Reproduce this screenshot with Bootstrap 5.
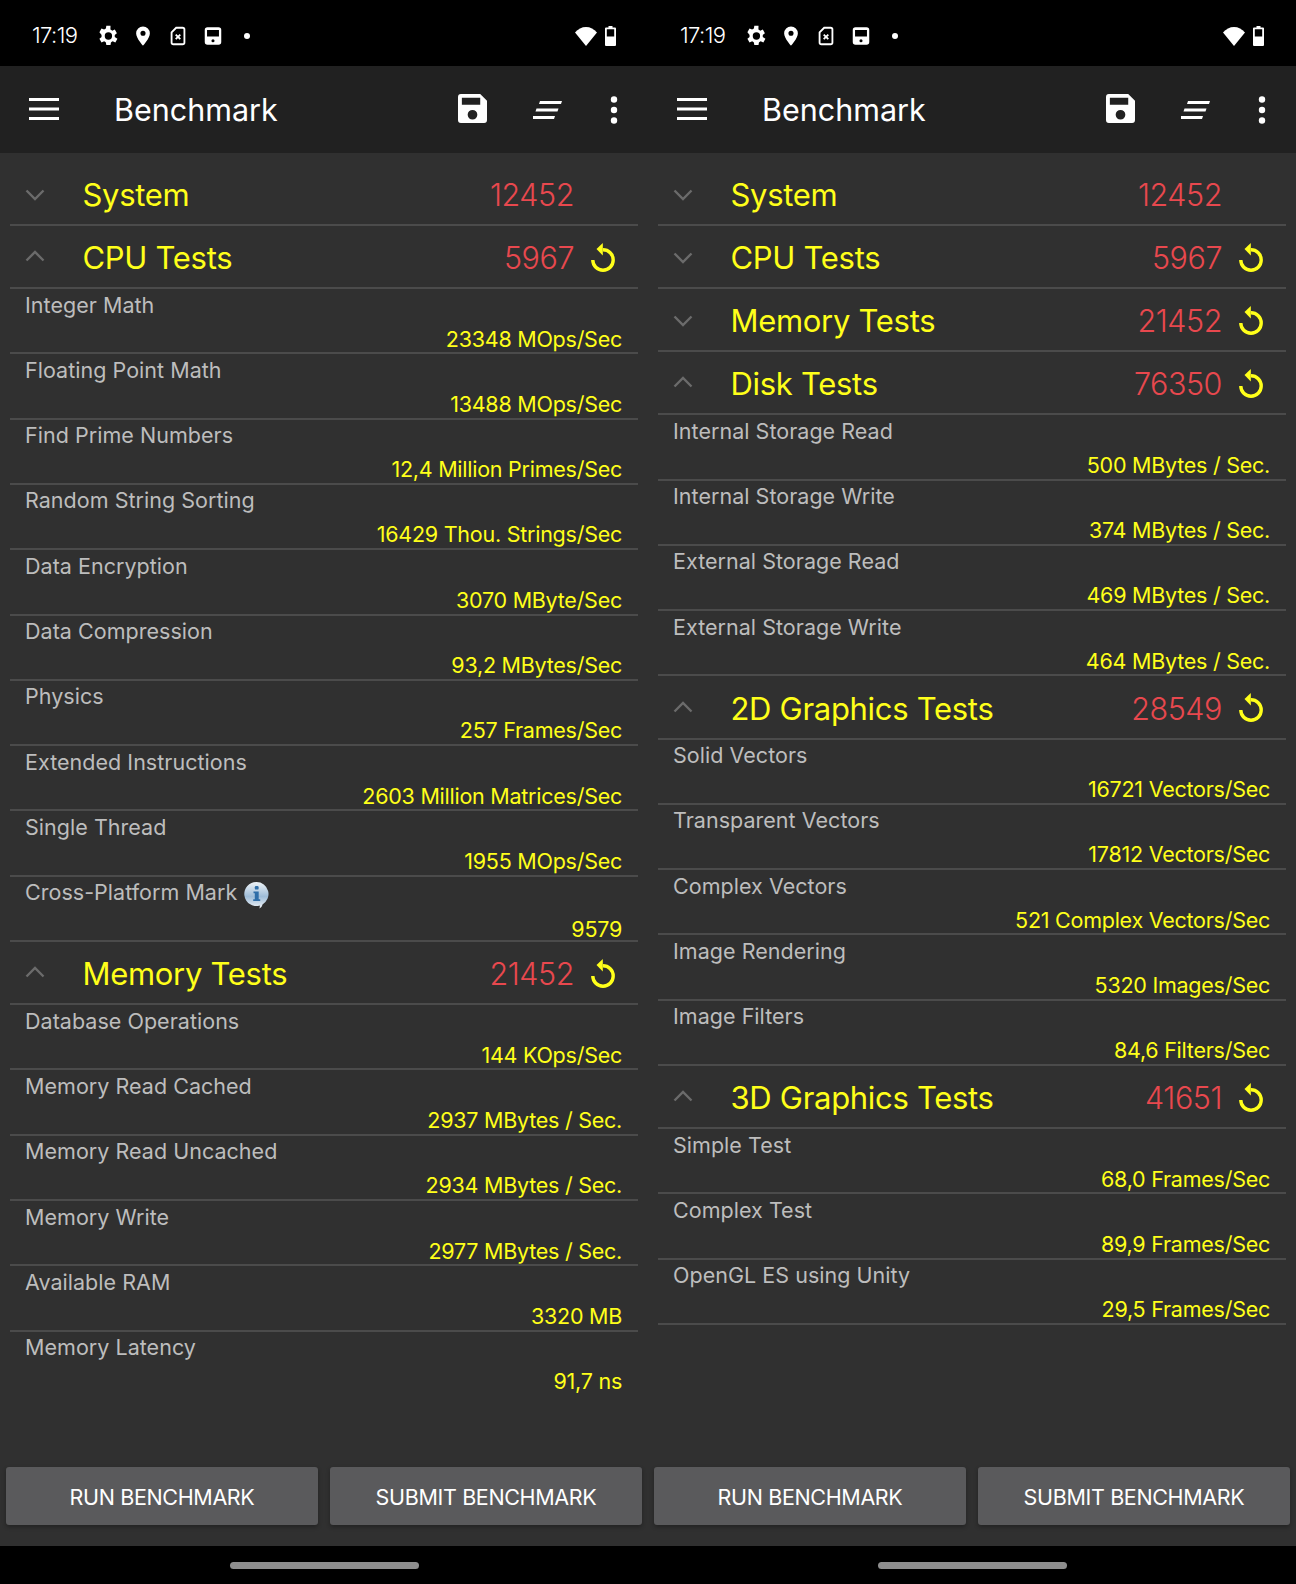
<!DOCTYPE html>
<html lang="en">
<head>
  <meta charset="UTF-8">
  <title>Benchmark</title>
  <link rel="stylesheet" href="https://cdn.jsdelivr.net/npm/bootstrap@5.3.2/dist/css/bootstrap.min.css">
  <style>
    body { background: #000; font-family: Inter, "Liberation Sans", sans-serif; }
    .phone { width: 648px; height: 1584px; background: #303030; }
    .status-bar { height: 66px; background: #000; color: #fff; padding: 5px 32px 0 32px; }
    .status-time { font-size: 22px; font-weight: 300; letter-spacing: -.6px; width: 46px; margin-right: 19px; white-space: nowrap; }
    .status-ico { width: 22px; height: 22px; margin-right: 13px; fill: #fff; }
    .status-dot { margin-left: 6px; }
    .status-wifi { margin-right: 8px; }
    .app-bar { height: 87px; background: #212121; color: #fff; padding-left: 29px; }
    .bar-burger { margin-top: -1px; }
    .app-title { font-size: 30.5px; font-weight: 400; margin-left: 55px; }
    .bar-save { margin-top: -2px; }
    .bar-sort { margin-left: 46px; }
    .bar-more { margin-left: 45px; margin-right: 28px; }
    .result-list { padding: 9px 10px 0; }
    .group-row { height: 63.1px; border-bottom: 2px solid #4b4b4b; }
    .group-first { height: 64px; }
    .group-chev { width: 72.5px; padding-left: 14.5px; }
    .chev-down { margin-top: 3px; }
    .chev-up { margin-bottom: 1px; }
    .group-name { color: #ffff1a; font-size: 31px; letter-spacing: -.3px; padding-top: 4px; }
    .group-score { color: #e8484e; font-size: 30.5px; font-weight: 350; letter-spacing: -.45px; margin-left: auto; padding-top: 3px; }
    .group-action { width: 64px; padding-left: 15px; height: 32px; }
    .test-row { height: 65.3px; border-bottom: 2px solid #4b4b4b; padding: 2.5px 16px 0 15px; }
    .test-row.no-line { border-bottom-color: transparent; }
    .test-label { color: #bdbdbd; font-size: 21.5px; line-height: 27px; letter-spacing: .03px; }
    .test-value { color: #ffff1a; font-size: 21.5px; line-height: 27px; letter-spacing: -.25px; text-align: right; margin-top: 7px; }
    .action-bar { padding: 0 6px 21px; gap: 12px; }
    .btn-bench { flex: 1 1 0; height: 58px; background: #5a5a5c; color: #fff; border: 0; border-radius: 3px; font-size: 21.5px; letter-spacing: -.35px; box-shadow: 0 2px 4px rgba(0,0,0,.3); padding: 2px 0 0; }
    .nav-strip { height: 38px; background: #000; padding-top: 16px; }
    .nav-pill { width: 189px; height: 7px; border-radius: 4px; background: #8e8e8e; }
    .info-ico { width: 29px; height: 29px; vertical-align: -9px; margin-left: 5px; }
  </style>
</head>
<body>

<svg width="0" height="0" class="position-absolute">
  <symbol id="i-gear" viewBox="2.500 1.500 21 21"><path d="M19.400 13c.05-.33.1-.66.1-1s-.05-.67-.1-1l2.100-1.650-2-3.460-2.500 1a7.600 7.600 0 0 0-1.700-1L15.400 2.300h-4l-.4 2.600a7.600 7.600 0 0 0-1.700 1l-2.500-1-2 3.460L6.900 11c-.05.33-.1.66-.1 1s.05.67.1 1l-2.100 1.650 2 3.460 2.500-1c.52.4 1.100.75 1.700 1l.4 2.600h4l.4-2.600c.6-.25 1.180-.6 1.700-1l2.500 1 2-3.460zM13.400 15.500a3.500 3.500 0 1 1 0-7 3.500 3.500 0 0 1 0 7z"/></symbol>
  <symbol id="i-pin" viewBox="0 0 24 24"><path fill-rule="evenodd" d="M12 1.500a7.500 7.500 0 0 0-7.500 7.500c0 5.500 7.500 13.500 7.500 13.500S19.500 14.500 19.500 9A7.500 7.500 0 0 0 12 1.500zM12 11.800a2.800 2.800 0 1 1 0-5.600 2.800 2.800 0 0 1 0 5.600z"/></symbol>
  <symbol id="i-sim" viewBox="0 0 24 24"><path fill="none" stroke="#fff" stroke-width="2" d="M10 3h7a2 2 0 0 1 2 2v14a2 2 0 0 1-2 2H7a2 2 0 0 1-2-2V8z"/><path fill="none" stroke="#fff" stroke-width="2" d="M9.500 10.500l5 5m0-5l-5 5"/></symbol>
  <symbol id="i-train" viewBox="0 0 24 24"><path fill-rule="evenodd" d="M6 2.500h12a3 3 0 0 1 3 3v13a3 3 0 0 1-3 3H6a3 3 0 0 1-3-3v-13a3 3 0 0 1 3-3zM5.500 5.500v7h13v-7zM12 15.500a1.700 1.700 0 1 0 0 3.400 1.700 1.700 0 0 0 0-3.400z"/></symbol>
  <symbol id="i-save" viewBox="0 0 30 30"><path fill-rule="evenodd" d="M3 0h20l7 7v20a3 3 0 0 1-3 3H3a3 3 0 0 1-3-3V3a3 3 0 0 1 3-3zM4 4v7h19V4zM15 16.500a5 5 0 1 0 0 10 5 5 0 0 0 0-10z"/></symbol>
  <symbol id="i-undo" viewBox="0 0 28 32"><path fill="none" stroke="#ffff1a" stroke-width="3.400" d="M3.800 19A10.200 10.200 0 1 0 14 8.800"/><path fill="#ffff1a" d="M7.500 8L13.800 2v12.500z"/></symbol>
  <symbol id="i-info" viewBox="0 0 29 29">
    <path fill="url(#bubble)" d="M14.500 2a12 12 0 0 1 6 22.400c-.4 1.800-1.400 3.200-3.200 4.100.5-1.100.6-2 .4-3A12 12 0 1 1 14.500 2z"/>
    <rect x="12.800" y="6" width="3.800" height="3.600" rx="1.200" fill="#2f6ea8"/>
    <path fill="#2f6ea8" d="M11.500 11.400h5.200v7.800h1.500v1.800h-7v-1.800h1.600v-6h-1.300z"/>
  </symbol>
  <linearGradient id="bubble" x1="0" y1="0" x2="0" y2="1"><stop offset="0" stop-color="#eef3f7"/><stop offset=".55" stop-color="#9dbcd8"/><stop offset="1" stop-color="#f2f5f8"/></linearGradient>
  <symbol id="i-up" viewBox="0 0 20 12"><path fill="none" stroke="#6b6b6b" stroke-width="2.400" d="M1.500 10.500L10 2l8.500 8.500"/></symbol>
  <symbol id="i-down" viewBox="0 0 20 12"><path fill="none" stroke="#6b6b6b" stroke-width="2.400" d="M1.500 1.500L10 10l8.500-8.500"/></symbol>
  <symbol id="i-wifi" viewBox="0 0 22 20"><path fill="#fff" d="M11 20L0 6.500C3 3 6.800 1 11 1s8 2 11 5.500z"/></symbol>
  <symbol id="i-batt" viewBox="0 0 11 20"><path fill="#fff" fill-rule="evenodd" d="M3.500 0h4v1.500H10a1 1 0 0 1 1 1V19a1 1 0 0 1-1 1H1a1 1 0 0 1-1-1V2.500a1 1 0 0 1 1-1h2.500zM1.800 3.300v7.200h7.400V3.300z"/></symbol>
</svg>

<div class="d-flex">

  <!-- Left phone -->
  <div class="phone d-flex flex-column">
    <div class="status-bar d-flex align-items-center flex-shrink-0">
      <span class="status-time">17:19</span>
      <svg class="status-ico"><use href="#i-gear"/></svg>
      <svg class="status-ico"><use href="#i-pin"/></svg>
      <svg class="status-ico"><use href="#i-sim"/></svg>
      <svg class="status-ico"><use href="#i-train"/></svg>
      <svg width="8" height="8" class="status-dot"><circle cx="4" cy="4" r="3" fill="#fff"/></svg>
      <svg class="ms-auto status-wifi" width="22" height="20"><use href="#i-wifi"/></svg>
      <svg width="11" height="20"><use href="#i-batt"/></svg>
    </div>
    <div class="app-bar d-flex align-items-center flex-shrink-0">
      <svg class="bar-burger" width="30" height="22" viewBox="0 0 30 22"><path fill="#fff" d="M0 0h30v3H0zM0 9.500h30v3H0zM0 19h30v3H0z"/></svg>
      <span class="app-title">Benchmark</span>
      <svg class="ms-auto bar-save" width="29" height="29" fill="#fff"><use href="#i-save"/></svg>
      <svg class="bar-sort" width="30" height="20" viewBox="0 0 30 20"><path fill="#fff" d="M7 1h22l-1 3H6zM3.500 8.500h22l-1 3h-22zM0 16h22l-1 3H0z"/></svg>
      <svg class="bar-more" width="12" height="28" viewBox="0 0 12 28"><circle cx="6" cy="3.500" r="3.200" fill="#fff"/><circle cx="6" cy="14" r="3.200" fill="#fff"/><circle cx="6" cy="24.500" r="3.200" fill="#fff"/></svg>
    </div>
    <div class="result-list flex-grow-1">
      <div class="group-row group-first d-flex align-items-center">
        <div class="group-chev"><svg width="20" height="12" class="d-block chev-down"><use href="#i-down"/></svg></div>
        <span class="group-name">System</span><span class="group-score">12452</span><div class="group-action"></div>
      </div>
      <div class="group-row d-flex align-items-center">
        <div class="group-chev"><svg width="20" height="12" class="d-block chev-up"><use href="#i-up"/></svg></div>
        <span class="group-name">CPU Tests</span><span class="group-score">5967</span><div class="group-action"><svg width="28" height="32"><use href="#i-undo"/></svg></div>
      </div>
      <div class="test-row"><div class="test-label">Integer Math</div><div class="test-value">23348 MOps/Sec</div></div>
      <div class="test-row"><div class="test-label">Floating Point Math</div><div class="test-value">13488 MOps/Sec</div></div>
      <div class="test-row"><div class="test-label">Find Prime Numbers</div><div class="test-value">12,4 Million Primes/Sec</div></div>
      <div class="test-row"><div class="test-label">Random String Sorting</div><div class="test-value">16429 Thou. Strings/Sec</div></div>
      <div class="test-row"><div class="test-label">Data Encryption</div><div class="test-value">3070 MByte/Sec</div></div>
      <div class="test-row"><div class="test-label">Data Compression</div><div class="test-value">93,2 MBytes/Sec</div></div>
      <div class="test-row"><div class="test-label">Physics</div><div class="test-value">257 Frames/Sec</div></div>
      <div class="test-row"><div class="test-label">Extended Instructions</div><div class="test-value">2603 Million Matrices/Sec</div></div>
      <div class="test-row"><div class="test-label">Single Thread</div><div class="test-value">1955 MOps/Sec</div></div>
      <div class="test-row"><div class="test-label">Cross-Platform Mark<svg class="info-ico"><use href="#i-info"/></svg></div><div class="test-value">9579</div></div>
      <div class="group-row d-flex align-items-center">
        <div class="group-chev"><svg width="20" height="12" class="d-block chev-up"><use href="#i-up"/></svg></div>
        <span class="group-name">Memory Tests</span><span class="group-score">21452</span><div class="group-action"><svg width="28" height="32"><use href="#i-undo"/></svg></div>
      </div>
      <div class="test-row"><div class="test-label">Database Operations</div><div class="test-value">144 KOps/Sec</div></div>
      <div class="test-row"><div class="test-label">Memory Read Cached</div><div class="test-value">2937 MBytes / Sec.</div></div>
      <div class="test-row"><div class="test-label">Memory Read Uncached</div><div class="test-value">2934 MBytes / Sec.</div></div>
      <div class="test-row"><div class="test-label">Memory Write</div><div class="test-value">2977 MBytes / Sec.</div></div>
      <div class="test-row"><div class="test-label">Available RAM</div><div class="test-value">3320 MB</div></div>
      <div class="test-row no-line"><div class="test-label">Memory Latency</div><div class="test-value">91,7 ns</div></div>
    </div>
    <div class="action-bar d-flex flex-shrink-0">
      <button class="btn btn-bench">RUN BENCHMARK</button>
      <button class="btn btn-bench">SUBMIT BENCHMARK</button>
    </div>
    <div class="nav-strip d-flex justify-content-center flex-shrink-0"><div class="nav-pill"></div></div>
  </div>

  <!-- Right phone -->
  <div class="phone d-flex flex-column">
    <div class="status-bar d-flex align-items-center flex-shrink-0">
      <span class="status-time">17:19</span>
      <svg class="status-ico"><use href="#i-gear"/></svg>
      <svg class="status-ico"><use href="#i-pin"/></svg>
      <svg class="status-ico"><use href="#i-sim"/></svg>
      <svg class="status-ico"><use href="#i-train"/></svg>
      <svg width="8" height="8" class="status-dot"><circle cx="4" cy="4" r="3" fill="#fff"/></svg>
      <svg class="ms-auto status-wifi" width="22" height="20"><use href="#i-wifi"/></svg>
      <svg width="11" height="20"><use href="#i-batt"/></svg>
    </div>
    <div class="app-bar d-flex align-items-center flex-shrink-0">
      <svg class="bar-burger" width="30" height="22" viewBox="0 0 30 22"><path fill="#fff" d="M0 0h30v3H0zM0 9.500h30v3H0zM0 19h30v3H0z"/></svg>
      <span class="app-title">Benchmark</span>
      <svg class="ms-auto bar-save" width="29" height="29" fill="#fff"><use href="#i-save"/></svg>
      <svg class="bar-sort" width="30" height="20" viewBox="0 0 30 20"><path fill="#fff" d="M7 1h22l-1 3H6zM3.500 8.500h22l-1 3h-22zM0 16h22l-1 3H0z"/></svg>
      <svg class="bar-more" width="12" height="28" viewBox="0 0 12 28"><circle cx="6" cy="3.500" r="3.200" fill="#fff"/><circle cx="6" cy="14" r="3.200" fill="#fff"/><circle cx="6" cy="24.500" r="3.200" fill="#fff"/></svg>
    </div>
    <div class="result-list flex-grow-1">
      <div class="group-row group-first d-flex align-items-center">
        <div class="group-chev"><svg width="20" height="12" class="d-block chev-down"><use href="#i-down"/></svg></div>
        <span class="group-name">System</span><span class="group-score">12452</span><div class="group-action"></div>
      </div>
      <div class="group-row d-flex align-items-center">
        <div class="group-chev"><svg width="20" height="12" class="d-block chev-down"><use href="#i-down"/></svg></div>
        <span class="group-name">CPU Tests</span><span class="group-score">5967</span><div class="group-action"><svg width="28" height="32"><use href="#i-undo"/></svg></div>
      </div>
      <div class="group-row d-flex align-items-center">
        <div class="group-chev"><svg width="20" height="12" class="d-block chev-down"><use href="#i-down"/></svg></div>
        <span class="group-name">Memory Tests</span><span class="group-score">21452</span><div class="group-action"><svg width="28" height="32"><use href="#i-undo"/></svg></div>
      </div>
      <div class="group-row d-flex align-items-center">
        <div class="group-chev"><svg width="20" height="12" class="d-block chev-up"><use href="#i-up"/></svg></div>
        <span class="group-name">Disk Tests</span><span class="group-score">76350</span><div class="group-action"><svg width="28" height="32"><use href="#i-undo"/></svg></div>
      </div>
      <div class="test-row"><div class="test-label">Internal Storage Read</div><div class="test-value">500 MBytes / Sec.</div></div>
      <div class="test-row"><div class="test-label">Internal Storage Write</div><div class="test-value">374 MBytes / Sec.</div></div>
      <div class="test-row"><div class="test-label">External Storage Read</div><div class="test-value">469 MBytes / Sec.</div></div>
      <div class="test-row"><div class="test-label">External Storage Write</div><div class="test-value">464 MBytes / Sec.</div></div>
      <div class="group-row d-flex align-items-center">
        <div class="group-chev"><svg width="20" height="12" class="d-block chev-up"><use href="#i-up"/></svg></div>
        <span class="group-name">2D Graphics Tests</span><span class="group-score">28549</span><div class="group-action"><svg width="28" height="32"><use href="#i-undo"/></svg></div>
      </div>
      <div class="test-row"><div class="test-label">Solid Vectors</div><div class="test-value">16721 Vectors/Sec</div></div>
      <div class="test-row"><div class="test-label">Transparent Vectors</div><div class="test-value">17812 Vectors/Sec</div></div>
      <div class="test-row"><div class="test-label">Complex Vectors</div><div class="test-value">521 Complex Vectors/Sec</div></div>
      <div class="test-row"><div class="test-label">Image Rendering</div><div class="test-value">5320 Images/Sec</div></div>
      <div class="test-row"><div class="test-label">Image Filters</div><div class="test-value">84,6 Filters/Sec</div></div>
      <div class="group-row d-flex align-items-center">
        <div class="group-chev"><svg width="20" height="12" class="d-block chev-up"><use href="#i-up"/></svg></div>
        <span class="group-name">3D Graphics Tests</span><span class="group-score">41651</span><div class="group-action"><svg width="28" height="32"><use href="#i-undo"/></svg></div>
      </div>
      <div class="test-row"><div class="test-label">Simple Test</div><div class="test-value">68,0 Frames/Sec</div></div>
      <div class="test-row"><div class="test-label">Complex Test</div><div class="test-value">89,9 Frames/Sec</div></div>
      <div class="test-row"><div class="test-label">OpenGL ES using Unity</div><div class="test-value">29,5 Frames/Sec</div></div>
    </div>
    <div class="action-bar d-flex flex-shrink-0">
      <button class="btn btn-bench">RUN BENCHMARK</button>
      <button class="btn btn-bench">SUBMIT BENCHMARK</button>
    </div>
    <div class="nav-strip d-flex justify-content-center flex-shrink-0"><div class="nav-pill"></div></div>
  </div>

</div>

<script src="https://cdn.jsdelivr.net/npm/bootstrap@5.3.2/dist/js/bootstrap.bundle.min.js"></script>
</body>
</html>
